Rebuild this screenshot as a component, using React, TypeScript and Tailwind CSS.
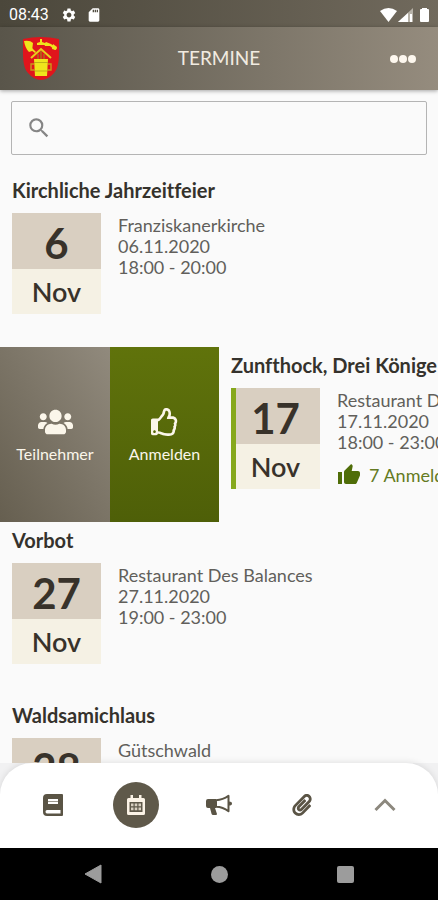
import { FaPaperclip, FaRegThumbsUp, FaUsers } from "react-icons/fa";
import { MdSearch, MdSettings, MdSdCard, MdThumbUp } from "react-icons/md";

type Termin = {
  title: string;
  day: string;
  month: string;
  place: string;
  date: string;
  time?: string;
  registered?: string;
};

const first: Termin = {
  title: "Kirchliche Jahrzeitfeier",
  day: "6",
  month: "Nov",
  place: "Franziskanerkirche",
  date: "06.11.2020",
  time: "18:00 - 20:00",
};

const swiped: Termin = {
  title: "Zunfthock, Drei Könige",
  day: "17",
  month: "Nov",
  place: "Restaurant Drei Könige",
  date: "17.11.2020",
  time: "18:00 - 23:00",
  registered: "7 Anmeldungen",
};

const rest: Termin[] = [
  {
    title: "Vorbot",
    day: "27",
    month: "Nov",
    place: "Restaurant Des Balances",
    date: "27.11.2020",
    time: "19:00 - 23:00",
  },
  {
    title: "Waldsamichlaus",
    day: "28",
    month: "Nov",
    place: "Gütschwald",
    date: "28.11.2020",
  },
];

function Crest() {
  return (
    <svg viewBox="0 0 38 44" className="h-[44px] w-[38px]" aria-hidden="true">
      <path d="M1 2Q19-2 37 2C37 17 38 29 32 36Q26 43 19 43Q12 43 6 36C0 29 1 17 1 2Z" fill="#e0151c" />
      <g fill="#efe51c">
        <path d="M2 4Q8 3 11 6L10 14L7 15Q3 11 2 4Z" />
        <path d="M10 11L14 15L13 16L9 13Z" />
        <path d="M24 5L29 7L35 11L33 13L28 9L23 9L22 7Z" />
        <path d="M31 7L35 10L34 13L30 12Z" />
        <path d="M18 2H20V5L23 6V8H15V6L18 5Z" />
        <path d="M12 22H26L25 39H13Z" />
      </g>
      <path d="M9 21L19 12L29 21" fill="none" stroke="#e6cf1c" strokeWidth="2" />
      <path d="M12 27H9V33H13M26 27H29V33H25" fill="none" stroke="#c99a1a" strokeWidth="1.4" />
      <path d="M16 17V22M19 14V22M22 17V22" stroke="#a8741a" strokeWidth="1.4" />
      <path d="M12 25.500H26M13 34H25" stroke="#b3a516" strokeWidth="0.8" />
    </svg>
  );
}

function BookIcon() {
  return (
    <svg viewBox="0 0 20 22" className="h-[22px] w-5" aria-hidden="true">
      <path
        fillRule="evenodd"
        fill="currentColor"
        d="M4 0H19Q20 0 20 1V21Q20 22 19 22H4Q0 22 0 18V4Q0 0 4 0ZM5 5V10H15V5ZM4 16Q2.500 16 2.500 17.700Q2.500 19.500 4 19.500H17.500V16Z"
      />
      <path d="M5 7.500H15" stroke="currentColor" strokeWidth="0.6" />
    </svg>
  );
}

function MegaphoneIcon() {
  return (
    <svg viewBox="0 0 26 22" className="h-[22px] w-[26px]" aria-hidden="true">
      <path d="M2 5H10V14H9L11 20Q11 21 10 21H7Q6 21 5.600 20L4 14H2Q0 14 0 12V7Q0 5 2 5Z" fill="currentColor" />
      <path d="M10 6.200Q17 6 22.500 1.800V17.200Q17 13 10 12.800Z" fill="none" stroke="currentColor" strokeWidth="2" strokeLinejoin="round" />
      <path d="M23 7.500Q26 7.500 26 9.500Q26 11.500 23 11.500Z" fill="currentColor" />
    </svg>
  );
}

function CalendarIcon() {
  return (
    <svg viewBox="0 0 18 20" className="h-5 w-[18px]" aria-hidden="true">
      <path
        fillRule="evenodd"
        fill="#fbf3e6"
        d="M3.500 0H6V3H12V0H14.500V3H16.500Q18 3 18 4.500V18.500Q18 20 16.500 20H1.500Q0 20 0 18.500V4.500Q0 3 1.500 3H3.500ZM2.500 7V17H15.500V7Z"
      />
      <path
        fill="#d8cfc0"
        d="M4 8.500H6.500V11.300H4ZM7.700 8.500H10.300V11.300H7.700ZM11.500 8.500H14V11.300H11.500ZM4 12.500H6.500V15.300H4ZM7.700 12.500H10.300V15.300H7.700ZM11.500 12.500H14V15.300H11.500Z"
      />
    </svg>
  );
}

function TerminBody({ termin }: { termin: Termin }) {
  return (
    <article className="h-[175px] w-full shrink-0 px-3 pt-1.5">
      <h2 className="text-xl leading-6 font-bold whitespace-nowrap text-[#35322c]">{termin.title}</h2>
      <div className="mt-[11px] flex gap-[17px]">
        <div className="relative h-[101px] w-[89px] shrink-0 text-center text-[#38322a]">
          <div className="h-14 bg-[#d9cfc1] pt-0.5 text-[42px] leading-14 font-bold">{termin.day}</div>
          <div className="h-[45px] bg-[#f5f1e4] text-[27px] leading-[46px] font-semibold">{termin.month}</div>
          {termin.registered && <span className="absolute inset-y-0 left-0 w-[5px] bg-[#86a81c]" />}
        </div>
        <div className="pt-0.5 text-lg leading-[21px] whitespace-nowrap text-[#615f5b]">
          <p>{termin.place}</p>
          <p>{termin.date}</p>
          <p>{termin.time}</p>
          {termin.registered && (
            <p className="mt-2.5 flex items-center gap-2 text-[#647a22]">
              <MdThumbUp className="size-6 text-[#4f6d08]" />
              {termin.registered}
            </p>
          )}
        </div>
      </div>
    </article>
  );
}

export default function App() {
  return (
    <div className="flex h-screen flex-col overflow-hidden bg-[#fafafa] font-['Lato',sans-serif] [font-variant-ligatures:none]">
      <div className="flex h-[27px] shrink-0 items-center bg-linear-to-r from-[#4b473b] to-[#716a5d] pt-0.5 pr-2 pl-[9px] text-white">
        <span className="font-['Roboto',sans-serif] text-base">08:43</span>
        <MdSettings className="ml-3 size-4" />
        <MdSdCard className="ml-[9px] size-4" />
        <svg viewBox="0 0 50 16" className="ml-auto h-4 w-[50px]" aria-hidden="true">
          <path d="M0 4Q8.500-2 17 4L8.500 15Z" fill="#fff" />
          <path d="M33 1V15H18Z" fill="#b7b2a8" />
          <path d="M28 6V15H18Z" fill="#fff" />
          <path d="M31 7V15" stroke="#fff" strokeWidth="2" />
          <path d="M42 1H47V2H48Q49 2 49 3V14Q49 15 48 15H41Q40 15 40 14V3Q40 2 41 2H42Z" fill="#fff" />
        </svg>
      </div>

      <header className="z-10 grid h-[63px] shrink-0 grid-cols-[1fr_auto_1fr] items-center bg-linear-to-r from-[#59554a] to-[#958c7e] px-[22px] shadow-[0_1px_4px_rgba(0,0,0,0.35)]">
        <Crest />
        <h1 className="text-[19px] text-[#f1ebe1]">TERMINE</h1>
        <button type="button" aria-label="Mehr" className="flex gap-[1px] justify-self-end">
          <span className="size-2 rounded-full bg-[#fdf7ee]" />
          <span className="size-2 rounded-full bg-[#fdf7ee]" />
          <span className="size-2 rounded-full bg-[#fdf7ee]" />
        </button>
      </header>

      <main className="min-h-0 flex-1 overflow-hidden">
        <label className="mx-[11px] mt-[11px] mb-[17px] flex h-[54px] items-center rounded-xs border border-[#b4b4b4] pl-[14px]">
          <MdSearch className="size-[26px] shrink-0 text-[#858585]" />
          <input type="search" aria-label="Suchen" className="ml-2 h-full min-w-0 flex-1 bg-transparent text-lg outline-none" />
        </label>

        <TerminBody termin={first} />

        <div className="flex overflow-hidden">
          <div className="flex w-[219px] shrink-0 text-base leading-5 text-[#fbf6ea]">
            <button
              type="button"
              className="flex w-[110px] flex-col items-center justify-center gap-2 bg-linear-to-tr from-[#665f50] to-[#918a7d] pt-0.5"
            >
              <FaUsers className="h-7 w-[35px]" />
              Teilnehmer
            </button>
            <button
              type="button"
              className="flex w-[109px] flex-col items-center justify-center gap-2 bg-linear-to-t from-[#4e5f08] to-[#60730b] pt-0.5"
            >
              <FaRegThumbsUp className="size-7" />
              Anmelden
            </button>
          </div>
          <TerminBody termin={swiped} />
        </div>

        {rest.map((termin) => (
          <TerminBody key={termin.title} termin={termin} />
        ))}
      </main>

      <div className="shrink-0 bg-[#f1f1f2]">
        <nav className="flex h-[85px] items-center justify-between rounded-t-[32px] bg-white px-[30px] pb-0.5 text-[#5a5445] shadow-[0_-1px_6px_rgba(0,0,0,0.10)]">
          <button type="button" aria-label="Verzeichnis" className="flex size-[46px] items-center justify-center">
            <BookIcon />
          </button>
          <button type="button" aria-label="Termine" className="flex size-[46px] items-center justify-center rounded-full bg-[#5f594a]">
            <CalendarIcon />
          </button>
          <button type="button" aria-label="Mitteilungen" className="flex size-[46px] items-center justify-center">
            <MegaphoneIcon />
          </button>
          <button type="button" aria-label="Dokumente" className="flex size-[46px] items-center justify-center">
            <FaPaperclip className="size-[22px]" />
          </button>
          <button type="button" aria-label="Mehr anzeigen" className="flex size-[46px] items-center justify-center">
            <svg viewBox="0 0 22 14" className="h-[14px] w-[22px]" aria-hidden="true">
              <path d="M1.500 12L11 2.500L20.500 12" fill="none" stroke="#8c887e" strokeWidth="3" />
            </svg>
          </button>
        </nav>
      </div>

      <div className="flex h-[52px] shrink-0 items-center justify-around bg-black px-[30px]">
        <button type="button" aria-label="Zurück">
          <svg viewBox="0 0 18 20" className="h-5 w-[18px]" aria-hidden="true">
            <path d="M17 1V19L1 10Z" fill="#9c9c9c" stroke="#9c9c9c" strokeLinejoin="round" />
          </svg>
        </button>
        <button type="button" aria-label="Startbildschirm" className="size-[17px] rounded-full bg-[#9c9c9c]" />
        <button type="button" aria-label="Übersicht" className="size-[17px] rounded-xs bg-[#9c9c9c]" />
      </div>
    </div>
  );
}
